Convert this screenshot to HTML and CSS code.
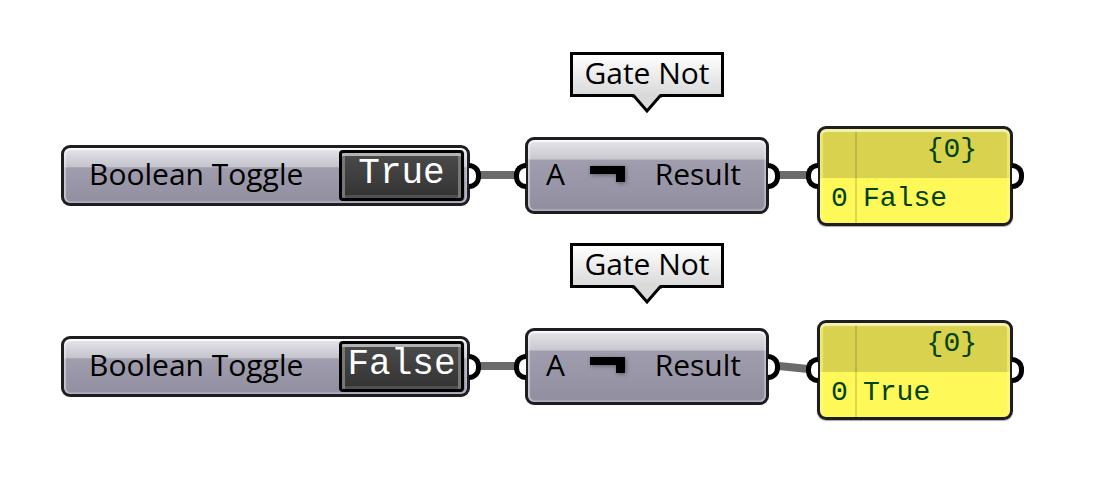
FILE: index.html
```html
<!DOCTYPE html>
<html lang="en">
<head>
<meta charset="utf-8">
<title>Gate Not</title>
<meta name="viewport" content="width=device-width, initial-scale=1">
<link rel="stylesheet" href="styles.css">
</head>
<body>
<main class="canvas">
  <svg class="wires" aria-hidden="true">
    <path d="M480 175H515M779 175H808M480 366H515M779 366L808 369"/>
  </svg>

  <section class="node toggle toggle-1">
    <span class="name" id="toggle-1">Boolean Toggle</span>
    <button class="value" type="button" aria-describedby="toggle-1">True</button>
    <i class="port out"></i>
  </section>
  <section class="node gate gate-1">
    <i class="port in"></i>
    <span>A</span>
    <svg class="not" viewBox="0 0 40 22" aria-hidden="true"><path d="M1 1H36V17H27V9H1Z"/></svg>
    <span>Result</span>
    <i class="port out"></i>
  </section>
  <div class="tip tip-1">Gate Not
    <svg class="tail" viewBox="0 0 30 20" aria-hidden="true"><path class="fill" d="M2 0V3L15 17L28 3V0Z"/><path class="edge" d="M0 2H2L15 17L28 2H30"/></svg>
  </div>
  <section class="node panel panel-1">
    <i class="port in"></i>
    <div class="path">{0}</div>
    <div class="row"><span class="index">0</span><span>False</span></div>
    <i class="port out"></i>
  </section>

  <section class="node toggle toggle-2">
    <span class="name" id="toggle-2">Boolean Toggle</span>
    <button class="value" type="button" aria-describedby="toggle-2">False</button>
    <i class="port out"></i>
  </section>
  <section class="node gate gate-2">
    <i class="port in"></i>
    <span>A</span>
    <svg class="not" viewBox="0 0 40 22" aria-hidden="true"><path d="M1 1H36V17H27V9H1Z"/></svg>
    <span>Result</span>
    <i class="port out"></i>
  </section>
  <div class="tip tip-2">Gate Not
    <svg class="tail" viewBox="0 0 30 20" aria-hidden="true"><path class="fill" d="M2 0V3L15 17L28 3V0Z"/><path class="edge" d="M0 2H2L15 17L28 2H30"/></svg>
  </div>
  <section class="node panel panel-2">
    <i class="port in"></i>
    <div class="path">{0}</div>
    <div class="row"><span class="index">0</span><span>True</span></div>
    <i class="port out"></i>
  </section>
</main>
</body>
</html>
```
FILE: styles.css
```css
* { box-sizing: border-box; }

body {
  margin: 0;
  background: #fff;
  color: #000;
  font: 30px/36px "Open Sans", "Noto Sans", sans-serif;
}

.canvas {
  position: relative;
  min-height: 100vh;
  overflow: hidden;
}

.wires {
  position: absolute;
  inset: 0;
  width: 100%;
  height: 100%;
  fill: none;
  stroke: #6b6b6b;
  stroke-width: 8;
}

/* Nodes */
.node {
  position: absolute;
  border: 3px solid #1d1d22;
  border-radius: 9px;
}

.toggle, .gate {
  display: flex;
  align-items: center;
  box-shadow: inset 0 2px 1px #fafafb, inset 2px 0 1px #ffffff66, inset -2px 0 1px #ffffff44, inset 0 -2px 1px #a9a7b5;
}
.toggle span, .gate span { padding-bottom: 4px; }

.toggle {
  left: 61px;
  width: 409px;
  height: 61px;
  padding: 0 3px 0 25px;
  justify-content: space-between;
  background: linear-gradient(#e6e6ea, #c6c6cf 32%, #c4c4cd 34%, #a09eae 36%, #918f9f);
}
.toggle-1 { top: 145px; }
.toggle-2 { top: 336px; }

.gate {
  left: 525px;
  width: 244px;
  height: 77px;
  padding: 0 25px 0 18px;
  background: linear-gradient(#e6e6ea, #c8c8d0 27%, #a09eae 28%, #918f9f);
}
.gate-1 { top: 137px; }
.gate-2 { top: 328px; }
.gate span:last-of-type { margin-left: auto; }

.not {
  width: 40px;
  height: 22px;
  margin-left: 24px;
  overflow: visible;
  filter: drop-shadow(1px 1px 2px #0006);
}

.value {
  width: 125px;
  height: 51px;
  padding: 0 0 4px;
  border: 3px solid #000;
  border-radius: 4px;
  background: linear-gradient(#4b4b4b, #333);
  box-shadow: inset 0 3px #b0b4b2, inset 3px 0 #777, inset -3px 0 #777, inset 0 -3px #505050;
  color: #fff;
  font: 36px/38px "Liberation Mono", monospace;
}

/* Ports are half rings that stick out of a node's side */
.port {
  position: absolute;
  top: 50%;
  width: 12px;
  height: 26px;
  margin-top: -13px;
  border: 5px solid #000;
  background: #fff;
}
.port.out {
  left: calc(100% + 2px);
  border-left: 0;
  border-radius: 0 13px 13px 0;
}
.port.in {
  right: calc(100% + 2px);
  border-right: 0;
  border-radius: 13px 0 0 13px;
}

/* Callouts */
.tip {
  position: absolute;
  left: 570px;
  width: 154px;
  height: 45px;
  border: 3px solid #000;
  background: linear-gradient(#fff, #dadada);
  text-align: center;
}
.tip-1 { top: 52px; }
.tip-2 { top: 243px; }

.tail {
  position: absolute;
  top: 100%;
  left: 50%;
  width: 30px;
  height: 20px;
  margin-left: -15px;
}
.tail .fill { fill: #dadada; }
.tail .edge { fill: none; stroke: #000; stroke-width: 3; }

/* Panels */
.panel {
  left: 817px;
  width: 196px;
  height: 100px;
  display: grid;
  grid-template-rows: 49px 1fr;
  background: linear-gradient(90deg, transparent 35px, #0002 35px, #0002 37px, transparent 37px),
    linear-gradient(#d8d24e 49px, #fff859 49px);
  box-shadow: inset 0 3px 1px #f4f2b0, inset 3px 0 1px #fffa9088, inset -3px 0 1px #fffa9088, 0 1px 1px #0005;
  color: #00420a;
  font: 28px/42px "Liberation Mono", monospace;
}
.panel-1 { top: 126px; }
.panel-2 { top: 320px; }

.path {
  padding-right: 33px;
  text-align: right;
}
.row {
  display: grid;
  grid-template-columns: 43px 1fr;
}
.index { padding-left: 11px; }
```
